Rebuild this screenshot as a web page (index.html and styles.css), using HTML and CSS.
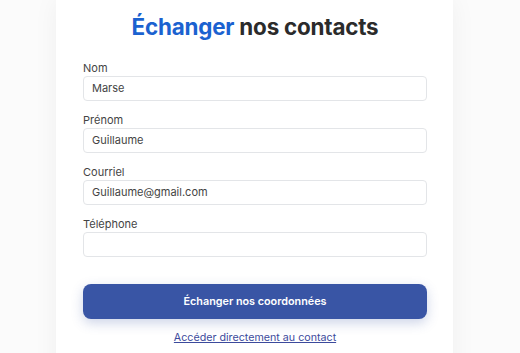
FILE: index.html
```html
<!DOCTYPE html>
<html lang="fr">
<head>
<meta charset="utf-8">
<link rel="stylesheet" href="styles.css">
</head>
<body>
<div class="page">
  <main class="card">
    <h1 class="title"><span class="accent">Échanger</span> nos contacts</h1>
    <form class="form">
      <div class="field">
        <label class="label">Nom</label>
        <div class="input">Marse</div>
      </div>
      <div class="field">
        <label class="label">Prénom</label>
        <div class="input">Guillaume</div>
      </div>
      <div class="field">
        <label class="label">Courriel</label>
        <div class="input">Guillaume@gmail.com</div>
      </div>
      <div class="field">
        <label class="label">Téléphone</label>
        <div class="input"></div>
      </div>
      <button type="button" class="btn">Échanger nos coordonnées</button>
      <a class="link" href="#">Accéder directement au contact</a>
    </form>
  </main>
</div>
</body>
</html>
```
FILE: styles.css
```css
* { box-sizing: border-box; }
html, body { margin: 0; height: 100%; }
body {
  background: #fbfbfb;
  font-family: Inter, "Noto Sans", sans-serif;
  overflow: hidden;
}
.page {
  padding-left: 56px;
}
.card {
  width: 397px;
  height: 400px;
  background: #ffffff;
  box-shadow: 0 0 24px rgba(0, 0, 0, 0.05);
  padding: 13px 26px 0 27px;
}
.title {
  margin: 0 0 21px;
  text-align: center;
  font-size: 22.4px;
  line-height: 27px;
  font-weight: 700;
  color: #2b2b2b;
  letter-spacing: -0.2px;
}
.accent { color: #1b62d0; }
.form {
  display: flex;
  flex-direction: column;
}
.field {
  display: flex;
  flex-direction: column;
  gap: 1px;
  margin-bottom: 12px;
}
.label {
  font-size: 11px;
  line-height: 14px;
  color: #444;
}
.input {
  height: 25px;
  border: 1px solid #e3e5e8;
  border-radius: 4px;
  padding: 0 8px;
  font-size: 11px;
  line-height: 23px;
  color: #444;
}
.btn {
  margin-top: 15px;
  height: 35px;
  border: none;
  border-radius: 8px;
  background: #3955a5;
  color: #fff;
  font-family: inherit;
  font-size: 10.8px;
  font-weight: 600;
  box-shadow: 0 4px 12px rgba(57, 85, 165, 0.25);
}
.link {
  margin-top: 12px;
  line-height: 14px;
  align-self: center;
  font-size: 10.7px;
  color: #3c4a9c;
  text-decoration: underline;
}
```
